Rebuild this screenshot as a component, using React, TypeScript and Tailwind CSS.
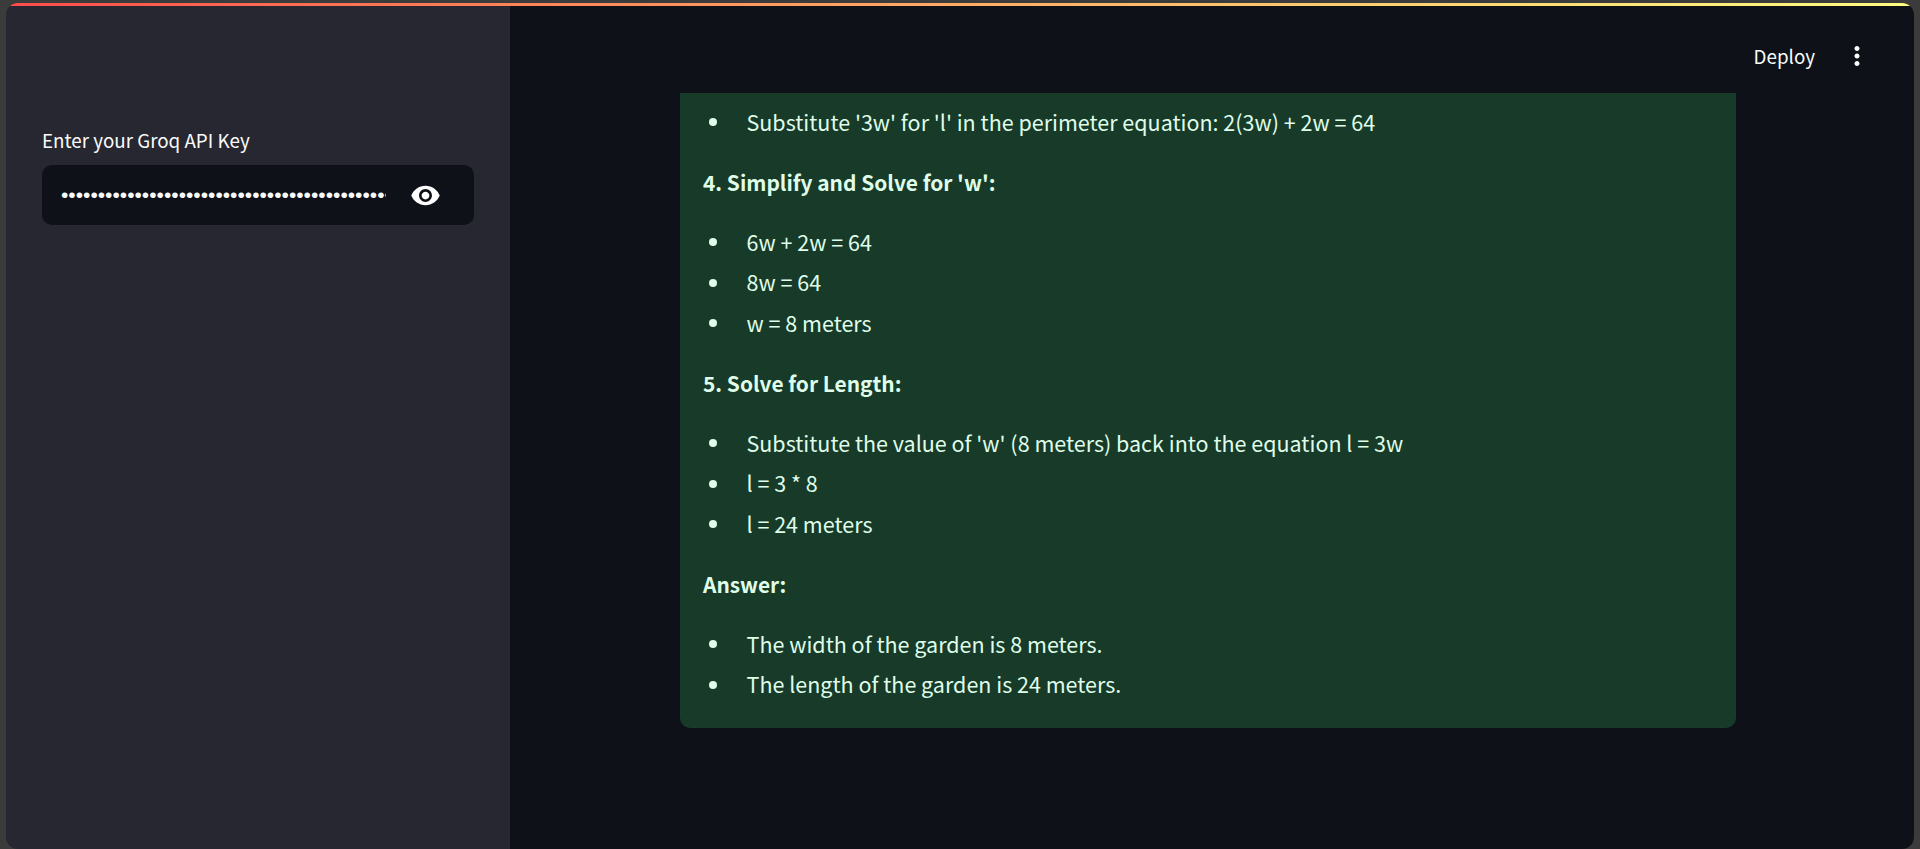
import { MdMoreVert, MdVisibility } from 'react-icons/md';

function Bullets({ items }: { items: string[] }) {
  return (
    <ul className="mb-[27.5px]">
      {items.map((item) => (
        <li key={item} className="flex items-center h-[32px] mb-[8.5px] pl-[6px]">
          <span className="w-[8px] h-[8px] rounded-full bg-[#dffde9] shrink-0" />
          <span className="ml-[29.5px]">{item}</span>
        </li>
      ))}
    </ul>
  );
}

function Heading({ children }: { children: string }) {
  return <p className="font-bold text-[20.9px] h-[32px] leading-[32px] mb-[28.5px]">{children}</p>;
}

export default function App() {
  return (
    <div className="h-[849px] w-full bg-[#3b3b3b] pt-[3px] px-[6px] overflow-hidden font-['Noto_Sans_CJK_SC','Source_Sans_Pro',sans-serif]">
      <div className="h-full flex flex-col rounded-[12px] overflow-hidden">
        {/* Barra de progresso do topo */}
        <div className="h-[3px] shrink-0 bg-gradient-to-r from-[#ff4b4b] to-[#fffd80]" />

        <div className="flex flex-1 min-h-0">
          {/* Sidebar */}
          <aside className="w-[504px] shrink-0 bg-[#262730] pt-[122px] px-[36px]">
            <label className="block text-[18.8px] leading-[24px] text-[#fafafa] mb-[13px]">
              Enter your Groq API Key
            </label>
            <div className="h-[60px] w-[432px] rounded-[10px] bg-[#0e1117] flex items-center pl-[19px]">
              <input
                type="password"
                readOnly
                value="gsk_abcdefghijklmnopqrstuvwxyz0123456789ABCDEFGHIJKLMN"
                className="w-[325px] bg-transparent text-[21px] text-[#fafafa] outline-none font-['Liberation_Sans',sans-serif]"
              />
              <MdVisibility className="ml-[24px] text-white" size={31} />
            </div>
          </aside>

          {/* Conteudo */}
          <main className="flex-1 min-w-0 bg-[#0e1117] flex flex-col">
            <header className="h-[87px] shrink-0 flex items-start justify-end pt-[38px] pr-[42px] text-[#fafafa]">
              <span className="text-[18.8px] leading-[24px]">Deploy</span>
              <MdMoreVert className="ml-[27px] -mt-[3px] text-white" size={30} />
            </header>

            <div className="ml-[170px] w-[1056px] h-[635px] rounded-b-[10px] bg-[#183a29] pt-[13px] pl-[23px] text-[21.5px] text-[#dffde9]">
              <Bullets items={["Substitute '3w' for 'l' in the perimeter equation: 2(3w) + 2w = 64"]} />
              <Heading>4. Simplify and Solve for 'w':</Heading>
              <Bullets items={['6w + 2w = 64', '8w = 64', 'w = 8 meters']} />
              <Heading>5. Solve for Length:</Heading>
              <Bullets
                items={[
                  "Substitute the value of 'w' (8 meters) back into the equation l = 3w",
                  'l = 3 * 8',
                  'l = 24 meters',
                ]}
              />
              <Heading>Answer:</Heading>
              <Bullets items={['The width of the garden is 8 meters.', 'The length of the garden is 24 meters.']} />
            </div>
          </main>
        </div>
      </div>
    </div>
  );
}
